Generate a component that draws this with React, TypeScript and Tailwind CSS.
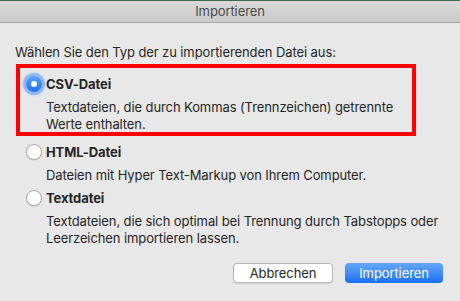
import React from "react";

function Radio({ checked }: { checked?: boolean }) {
  if (checked) {
    return (
      <div className="relative w-4 h-4 shrink-0 rounded-full bg-gradient-to-b from-[#5aa2fb] to-[#1f6ff4] shadow-[0_0_0_3px_rgba(100,160,250,0.55),0_0_3px_3px_rgba(100,160,250,0.35)] flex items-center justify-center">
        <div className="w-[6px] h-[6px] rounded-full bg-white" />
      </div>
    );
  }
  return (
    <div className="w-4 h-4 shrink-0 rounded-full bg-white border border-[#a9a9a9] shadow-[0_0.5px_1px_rgba(0,0,0,0.15)]" />
  );
}

function Option({
  label,
  lines,
  checked,
}: {
  label: string;
  lines: string[];
  checked?: boolean;
}) {
  return (
    <div className="flex flex-col">
      <div className="flex items-center h-4 pl-[26px] gap-1">
        <Radio checked={checked} />
        <span className="font-bold text-[13px] leading-4 text-[#262626]">{label}</span>
      </div>
      <div className="mt-[7px] pl-[46px] text-[13px] leading-[17px] text-[#262626]">
        {lines.map((l) => (
          <div key={l}>{l}</div>
        ))}
      </div>
    </div>
  );
}

export default function App() {
  return (
    <div
      className="relative w-[460px] h-[301px] bg-[#e8e8e8] flex flex-col overflow-hidden tracking-[-0.1px]"
      style={{ fontFamily: "Inter, 'Liberation Sans', sans-serif" }}
    >
      <div className="h-px bg-[#3c6b4d]" />
      <div className="h-[22px] bg-gradient-to-b from-[#dadada] to-[#cbcbcb] border-b border-[#a6a6a6] flex items-center justify-center text-[13px] text-[#4a4a4a]">
        Importieren
      </div>
      <div className="pl-[15px] mt-[21px] text-[13px] leading-4 text-[#262626]">
        Wählen Sie den Typ der zu importierenden Datei aus:
      </div>
      <div className="mt-4 flex flex-col">
        <Option
          checked
          label="CSV-Datei"
          lines={["Textdateien, die durch Kommas (Trennzeichen) getrennte", "Werte enthalten."]}
        />
        <div className="mt-[11px]">
          <Option label="HTML-Datei" lines={["Dateien mit Hyper Text-Markup von Ihrem Computer."]} />
        </div>
        <div className="mt-[6px]">
          <Option
            label="Textdatei"
            lines={[
              "Textdateien, die sich optimal bei Trennung durch Tabstopps oder",
              "Leerzeichen importieren lassen.",
            ]}
          />
        </div>
      </div>
      <div className="mt-auto mb-[18px] flex justify-end gap-3 pr-[17px]">
        <button className="w-[100px] h-5 rounded-[4px] bg-white border border-[#b8b8b8] shadow-[0_0.5px_1px_rgba(0,0,0,0.12)] text-[13px] text-[#262626] leading-none">
          Abbrechen
        </button>
        <button className="w-[98px] h-5 rounded-[4px] bg-gradient-to-b from-[#64a8fb] to-[#1b6ef5] text-[13px] text-white leading-none">
          Importieren
        </button>
      </div>
      <div className="absolute left-4 top-16 w-[400px] h-[72px] border-4 border-[#ff0000]" />
    </div>
  );
}
